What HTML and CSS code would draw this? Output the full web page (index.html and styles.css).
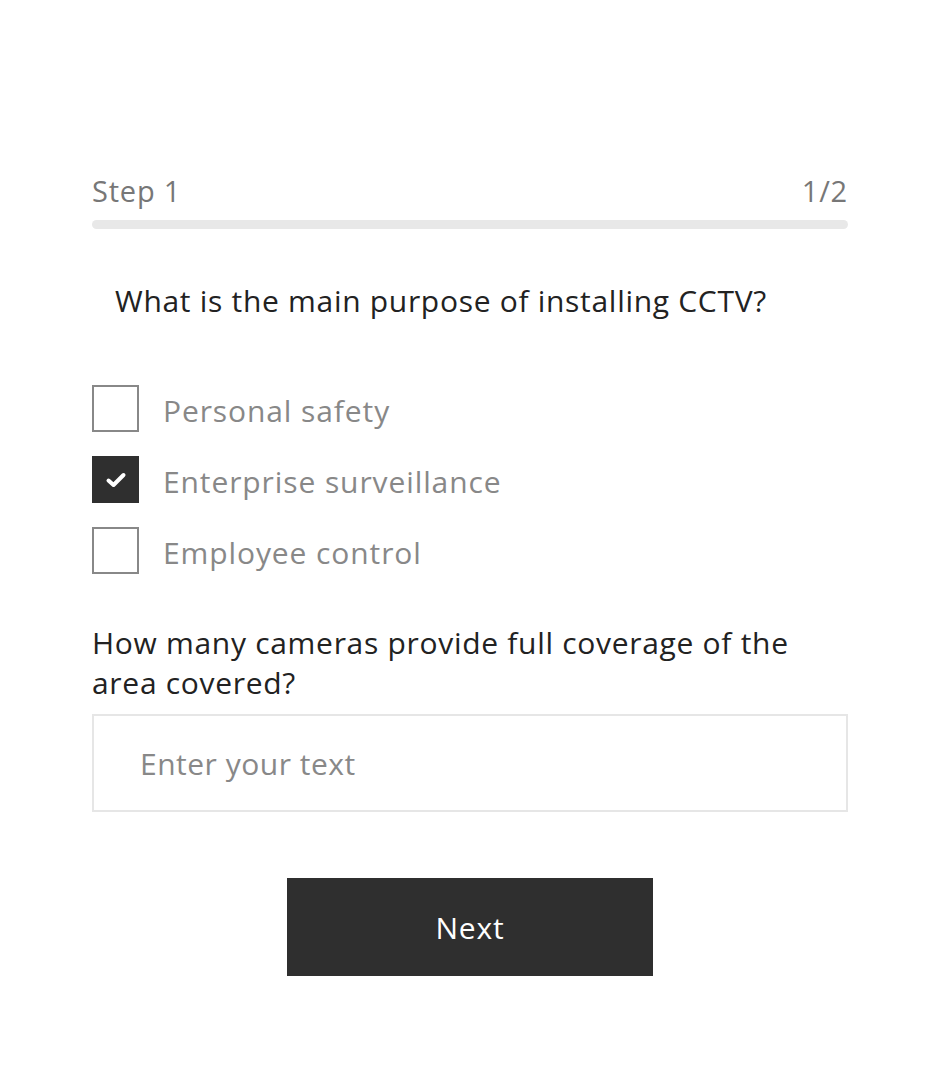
FILE: index.html
```html
<!DOCTYPE html>
<html>

<head>
  <meta charset="UTF-8">
  <title>CCTV survey</title>
  <link rel="stylesheet" href="styles.css">
</head>

<body>
  <div class="form">
    <!-- Progress -->
    <div class="step">
      <span>Step 1</span>
      <span>1/2</span>
    </div>
    <div class="bar"></div>

    <h2 class="q1">What is the main purpose of installing CCTV?</h2>

    <div class="options">
      <label class="opt">
        <span class="box"></span>
        <span class="txt">Personal safety</span>
      </label>
      <label class="opt">
        <span class="box checked">
          <svg width="22" height="18" viewBox="0 0 22 18">
            <path d="M3.5 9.5 L8.5 14 L18.5 4" fill="none" stroke="#fff" stroke-width="4" stroke-linecap="round" stroke-linejoin="round" />
          </svg>
        </span>
        <span class="txt">Enterprise surveillance</span>
      </label>
      <label class="opt">
        <span class="box"></span>
        <span class="txt">Employee control</span>
      </label>
    </div>

    <h2 class="q2">How many cameras provide full coverage of the area covered?</h2>
    <input class="field" type="text" placeholder="Enter your text">

    <div class="actions">
      <button class="next">Next</button>
    </div>
  </div>
</body>

</html>
```

FILE: styles.css
```css
body {
  margin: 0;
  background: #fff;
  font-family: "Open Sans", sans-serif;
}

.form {
  width: 756px;
  margin: 0 auto;
  padding-top: 169px;
}

.step {
  display: flex;
  justify-content: space-between;
  font-size: 29px;
  letter-spacing: 0.8px;
  line-height: 44px;
  color: #777;
}

.bar {
  height: 9px;
  margin-top: 7px;
  border-radius: 5px;
  background: #e8e8e8;
}

h2 {
  font-weight: 400;
  font-size: 30px;
  letter-spacing: 0.7px;
  color: #222;
  margin: 0;
}

.q1 {
  margin: 52px 0 0 23px;
  line-height: 40px;
}

.options {
  display: flex;
  flex-direction: column;
  gap: 24px;
  margin-top: 64px;
}

.opt {
  display: flex;
  align-items: center;
  gap: 24px;
}

.box {
  width: 47px;
  height: 47px;
  box-sizing: border-box;
  border: 2px solid #888;
  display: flex;
  align-items: center;
  justify-content: center;
}

.box.checked {
  border-color: #2f2f2f;
  background: #2f2f2f;
}

.txt {
  font-size: 30px;
  letter-spacing: 0.9px;
  color: #888;
  padding-top: 3px;
}

.q2 {
  margin-top: 49px;
  line-height: 40px;
}

.field {
  display: block;
  width: 100%;
  height: 98px;
  box-sizing: border-box;
  margin-top: 11px;
  border: 2px solid #e6e6e6;
  padding: 0 0 0 46px;
  font-family: "Open Sans", sans-serif;
  font-size: 30px;
  letter-spacing: 0.5px;
  color: #222;
  outline: none;
}

.field::placeholder {
  color: #888;
}

.actions {
  display: flex;
  justify-content: center;
  margin-top: 66px;
}

.next {
  width: 366px;
  height: 98px;
  border: 0;
  background: #2f2f2f;
  color: #fff;
  font-family: "Open Sans", sans-serif;
  font-size: 30px;
  letter-spacing: 0.8px;
}
```
